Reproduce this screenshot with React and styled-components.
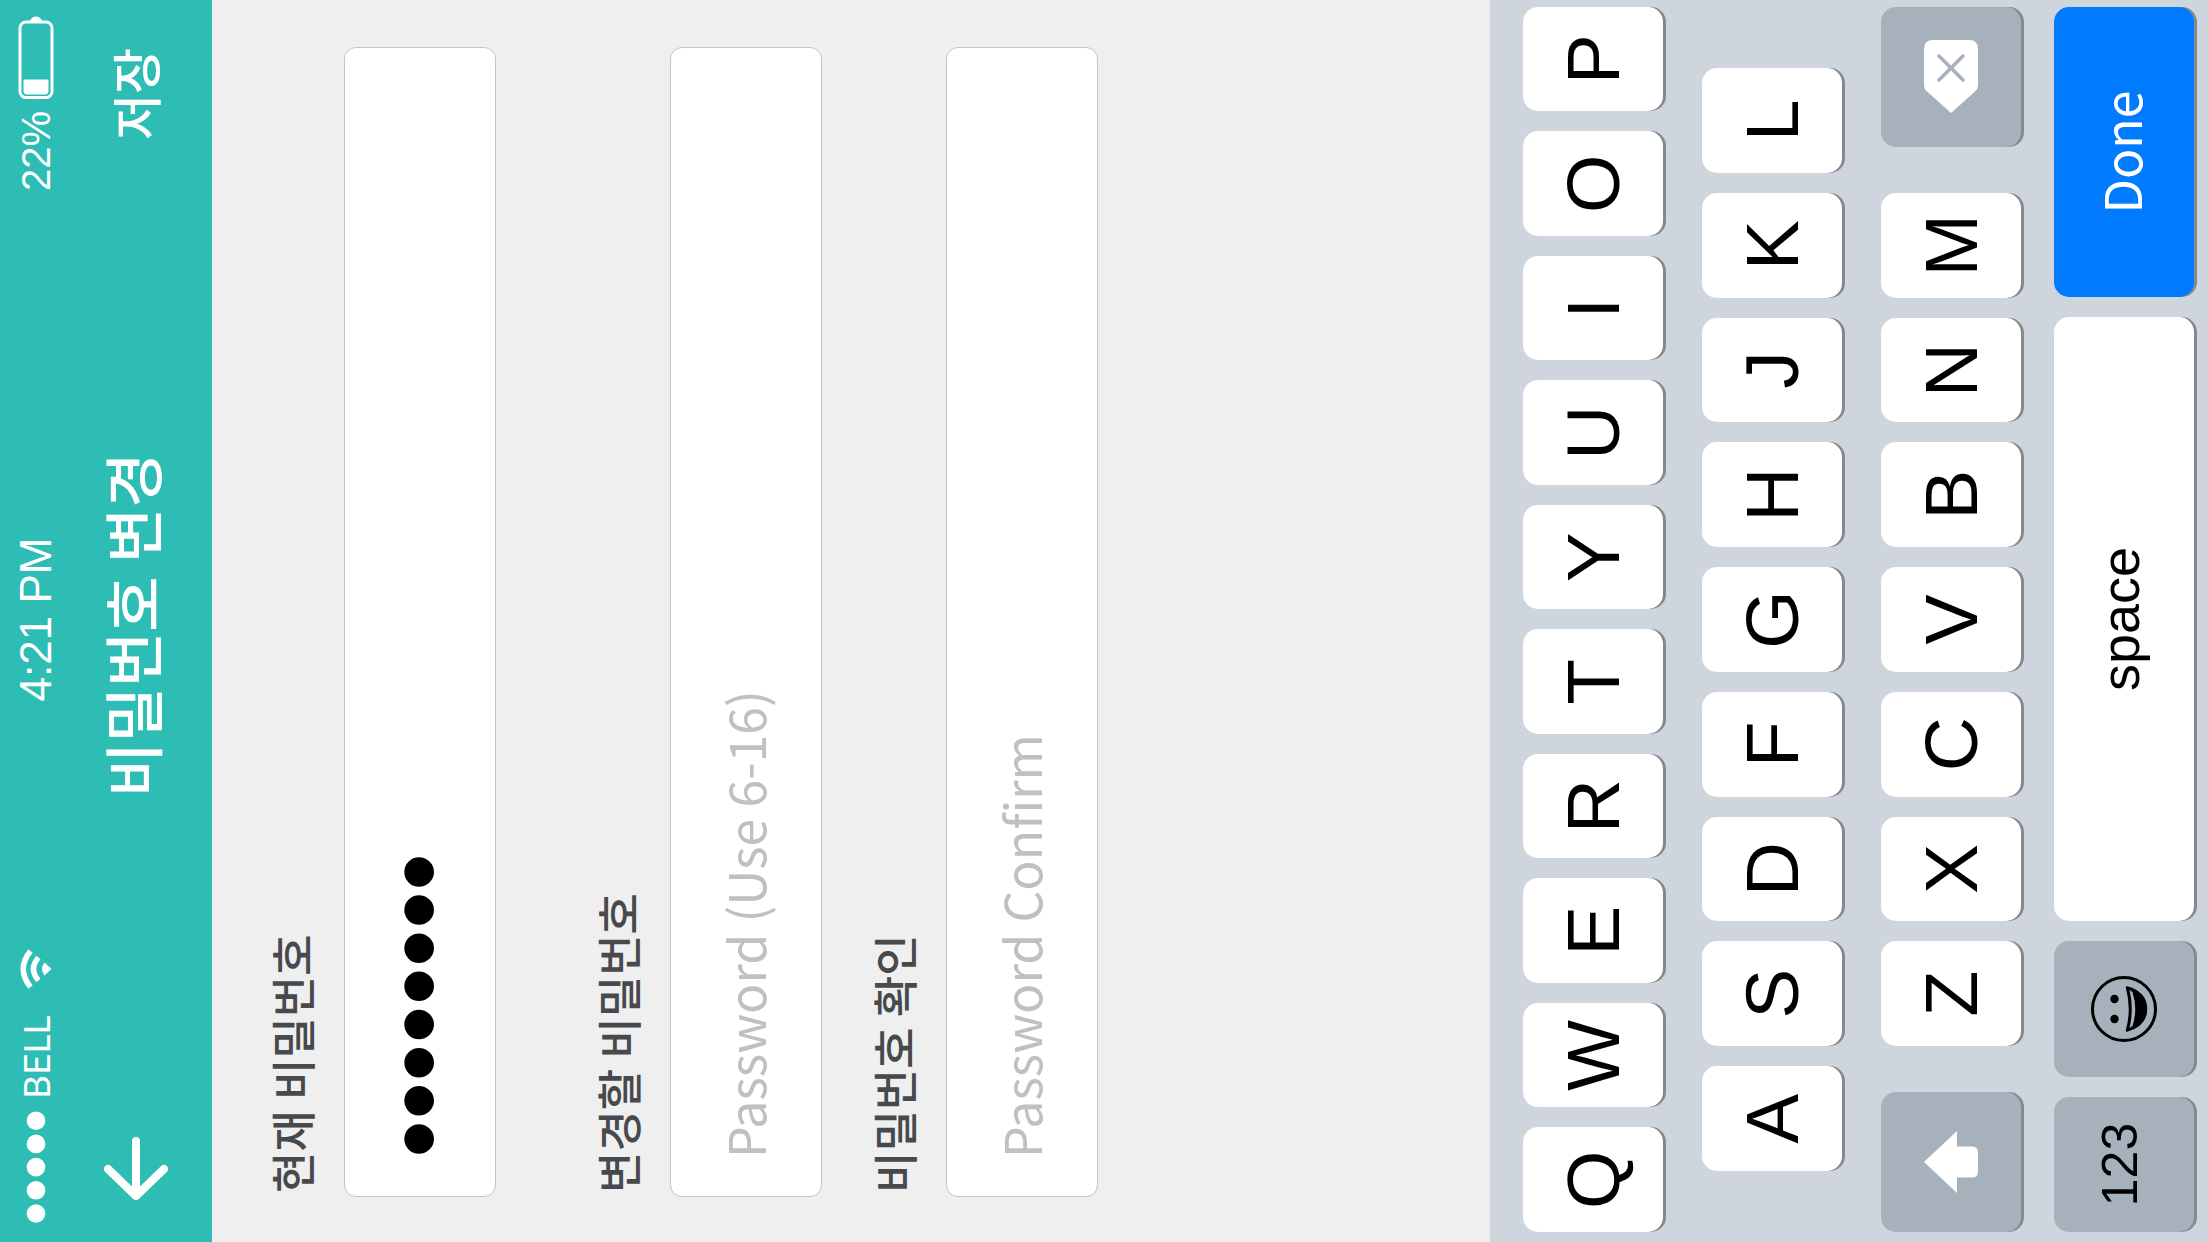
import React, { useState } from "react";
import styled, { createGlobalStyle } from "styled-components";

const korean = `"Noto Sans CJK KR", "Noto Sans", sans-serif`;
const latin = `"Liberation Sans", Arial, sans-serif`;

const GlobalStyle = createGlobalStyle`
  *, *::before, *::after { box-sizing: border-box; }
  html, body { margin: 0; overflow: hidden; }
  button, input { margin: 0; padding: 0; border: 0; font: inherit; color: inherit; background: none; }
`;

/* The phone is held on its side: the whole portrait screen is turned a quarter to the left. */
const Stage = styled.div`
  width: 100vw;
  height: 100vh;
  overflow: hidden;
`;

const Phone = styled.div`
  display: flex;
  flex-direction: column;
  width: 100vh;
  height: 100vw;
  transform-origin: top left;
  transform: translateY(100vh) rotate(-90deg);
  background: #efefef;
  font-family: ${korean};
`;

const Header = styled.header`
  height: 212px;
  background: #2dbdb5;
  color: #fff;
`;

const StatusBar = styled.div`
  display: grid;
  grid-template-columns: 1fr auto 1fr;
  align-items: center;
  height: 72px;
  padding: 0 16px 0 19px;
`;

const StatusGroup = styled.div`
  display: flex;
  align-items: center;
  justify-content: ${(p) => (p.$end ? "flex-end" : "flex-start")};
`;

const Carrier = styled.span`
  margin: 0 27px 0 12px;
  font: 400 37px/48px Lato, sans-serif;
`;

const StatusText = styled.span`
  margin-right: ${(p) => (p.$battery ? "12px" : "0")};
  font: 400 ${(p) => (p.$battery ? "40px" : "44px")}/48px ${latin};
`;

const NavBar = styled.nav`
  display: grid;
  grid-template-columns: 1fr auto 1fr;
  align-items: center;
  height: 128px;
  padding: 0 48px 0 40px;
`;

const BackButton = styled.button`
  display: flex;
  justify-self: start;
  cursor: pointer;
`;

const Title = styled.h1`
  margin: 0;
  padding-bottom: 10px;
  font-size: 60px;
  font-weight: 500;
  line-height: 80px;
`;

const SaveButton = styled.button`
  justify-self: end;
  padding-bottom: 4px;
  font-size: 50px;
  font-weight: 500;
  line-height: 80px;
  cursor: pointer;
`;

const Form = styled.form`
  flex: 1;
  display: flex;
  flex-direction: column;
  padding: 50px 47px 0 45px;
`;

const Field = styled.div`
  display: flex;
  flex-direction: column;
  gap: 22px;
  margin-bottom: ${(p) => (p.$apart ? "92px" : "42px")};
`;

const Label = styled.label`
  padding-left: 4px;
  font-size: 45px;
  font-weight: 500;
  line-height: 60px;
  color: #464a4c;
`;

const Input = styled.input`
  width: 100%;
  height: 152px;
  padding: 0 38px ${(p) => (p.$filled ? "6px" : "4px")};
  border: 1px solid #c4c4c4;
  border-radius: 12px;
  background: #fff;
  color: #000;
  font-size: ${(p) => (p.$filled ? "109px" : "50px")};
  font-family: ${(p) => (p.$filled ? latin : korean)};
  outline: none;
  &::placeholder {
    color: #c0c0c0;
    opacity: 1;
  }
`;

const Keyboard = styled.section`
  display: flex;
  flex-direction: column;
  gap: 33px;
  padding: 33px 7px 14px 10px;
  background: #cfd5dd;
`;

const LetterRows = styled.div`
  display: flex;
  flex-direction: column;
  gap: 39px;
`;

const KeyRow = styled.div`
  display: flex;
  gap: ${(p) => (p.$split ? "46px" : "20px")};
  height: 140px;
  padding: 0 ${(p) => (p.$indent ? "61px" : "0")};
`;

const LetterGroup = styled.div`
  flex: 1;
  display: flex;
  gap: 20px;
`;

const tones = {
  light: ["#fff", "#000"],
  dark: ["#a6b1bc", "#000"],
  blue: ["#007aff", "#fff"],
};

const Key = styled.button`
  flex: ${(p) => (p.$width ? `0 0 ${p.$width}px` : "1 1 0")};
  display: flex;
  align-items: center;
  justify-content: center;
  border-radius: 15px;
  background: ${(p) => tones[p.$tone || "light"][0]};
  color: ${(p) => tones[p.$tone || "light"][1]};
  box-shadow: 0 3px 0 #85898e;
  font-family: ${(p) => (p.$tone === "blue" ? korean : latin)};
  font-size: ${(p) => p.$size || 75}px;
  line-height: 80px;
  padding-bottom: ${(p) => (p.$raised ? "8px" : "0")};
  cursor: pointer;
`;

const SignalDots = () => (
  <svg width="112" height="20" viewBox="0 0 112 20" fill="#fff" aria-hidden="true">
    {[0, 1, 2, 3, 4].map((i) => (
      <circle key={i} cx={9.5 + i * 23.2} cy="10" r="9.3" />
    ))}
  </svg>
);

const WifiIcon = () => (
  <svg width="40" height="32" viewBox="0 0 40 32" aria-hidden="true">
    <path d="M20 31.500L13.500 24.500Q20 19.500 26.500 24.500Z" fill="#fff" />
    <path d="M8.500 18.500Q20 8.500 31.500 18.500M2 10.500Q20 -4 38 10.500" fill="none" stroke="#fff" strokeWidth="5.500" />
  </svg>
);

const BatteryIcon = () => (
  <svg width="83" height="36" viewBox="0 0 83 36" aria-hidden="true">
    <rect x="1.500" y="2" width="75.500" height="32" rx="6" fill="none" stroke="#fff" strokeWidth="3" />
    <path d="M4.500 5.500H19.500V30.500H8.500Q4.500 30.500 4.500 27V9Q4.500 5.500 8.500 5.500Z" fill="#fff" />
    <path d="M78 12Q82.500 13.500 82.500 18T78 24Z" fill="#fff" />
  </svg>
);

const BackIcon = () => (
  <svg width="66" height="66" viewBox="0 0 66 66" fill="none" stroke="#fff" strokeWidth="8" strokeLinecap="round" strokeLinejoin="round" aria-hidden="true">
    <path d="M61 33H7M33 5L6 33L33 61" />
  </svg>
);

const ShiftIcon = () => (
  <svg width="62" height="54" viewBox="0 0 62 54" fill="#fff" aria-hidden="true">
    <path d="M31 0L62 33H46.500V48Q46.500 54 40.500 54H21.500Q15.500 54 15.500 48V33H0Z" />
  </svg>
);

const DeleteIcon = () => (
  <svg width="73" height="54" viewBox="0 0 73 54" aria-hidden="true">
    <path d="M0 27L22 2.500Q24 0 28 0H64Q73 0 73 9V45Q73 54 64 54H28Q24 54 22 51.500Z" fill="#fff" />
    <path d="M33 15L57 39M57 15L33 39" stroke="#a6b1bc" strokeWidth="3.500" strokeLinecap="round" />
  </svg>
);

const EmojiIcon = () => (
  <svg width="66" height="66" viewBox="0 0 66 66" aria-hidden="true">
    <circle cx="33" cy="33" r="31.500" fill="none" stroke="#000" strokeWidth="3" />
    <circle cx="23" cy="23.500" r="4.200" />
    <circle cx="43" cy="23.500" r="4.200" />
    <path d="M11.500 36Q33 42 54.500 36Q49 55 33 55T11.500 36Z" stroke="#000" strokeWidth="2.500" strokeLinejoin="round" />
    <path d="M14 38.500Q33 43 52 38.500L50 41.500Q33 47 16 41.500Z" fill="#a6b1bc" />
  </svg>
);

const Letters = ({ keys }) => [...keys].map((k) => <Key key={k} type="button">{k}</Key>);

export default function App() {
  const [current, setCurrent] = useState("password");
  return (
    <Stage>
      <GlobalStyle />
      <Phone>
        <Header>
          <StatusBar>
            <StatusGroup>
              <SignalDots />
              <Carrier>BELL</Carrier>
              <WifiIcon />
            </StatusGroup>
            <StatusText>4:21 PM</StatusText>
            <StatusGroup $end>
              <StatusText $battery>22%</StatusText>
              <BatteryIcon />
            </StatusGroup>
          </StatusBar>
          <NavBar>
            <BackButton type="button" aria-label="뒤로">
              <BackIcon />
            </BackButton>
            <Title>비밀번호 변경</Title>
            <SaveButton type="submit" form="password-form">저장</SaveButton>
          </NavBar>
        </Header>
        <Form id="password-form" onSubmit={(e) => e.preventDefault()}>
          <Field $apart>
            <Label htmlFor="current">현재 비밀번호</Label>
            <Input id="current" type="password" $filled value={current} onChange={(e) => setCurrent(e.target.value)} />
          </Field>
          <Field>
            <Label htmlFor="next">변경할 비밀번호</Label>
            <Input id="next" type="password" placeholder="Password (Use 6-16)" />
          </Field>
          <Field>
            <Label htmlFor="confirm">비밀번호 확인</Label>
            <Input id="confirm" type="password" placeholder="Password Confirm" />
          </Field>
        </Form>
        <Keyboard aria-label="Keyboard">
          <LetterRows>
            <KeyRow>
              <Letters keys="QWERTYUIOP" />
            </KeyRow>
            <KeyRow $indent>
              <Letters keys="ASDFGHJKL" />
            </KeyRow>
            <KeyRow $split>
              <Key type="button" $tone="dark" $width={140} aria-label="shift"><ShiftIcon /></Key>
              <LetterGroup>
                <Letters keys="ZXCVBNM" />
              </LetterGroup>
              <Key type="button" $tone="dark" $width={140} aria-label="delete"><DeleteIcon /></Key>
            </KeyRow>
          </LetterRows>
          <KeyRow>
            <Key type="button" $tone="dark" $width={135} $size={50} $raised>123</Key>
            <Key type="button" $tone="dark" $width={136} aria-label="emoji"><EmojiIcon /></Key>
            <Key type="button" $size={54} $raised>space</Key>
            <Key type="button" $tone="blue" $width={290} $size={50} $raised>Done</Key>
          </KeyRow>
        </Keyboard>
      </Phone>
    </Stage>
  );
}
